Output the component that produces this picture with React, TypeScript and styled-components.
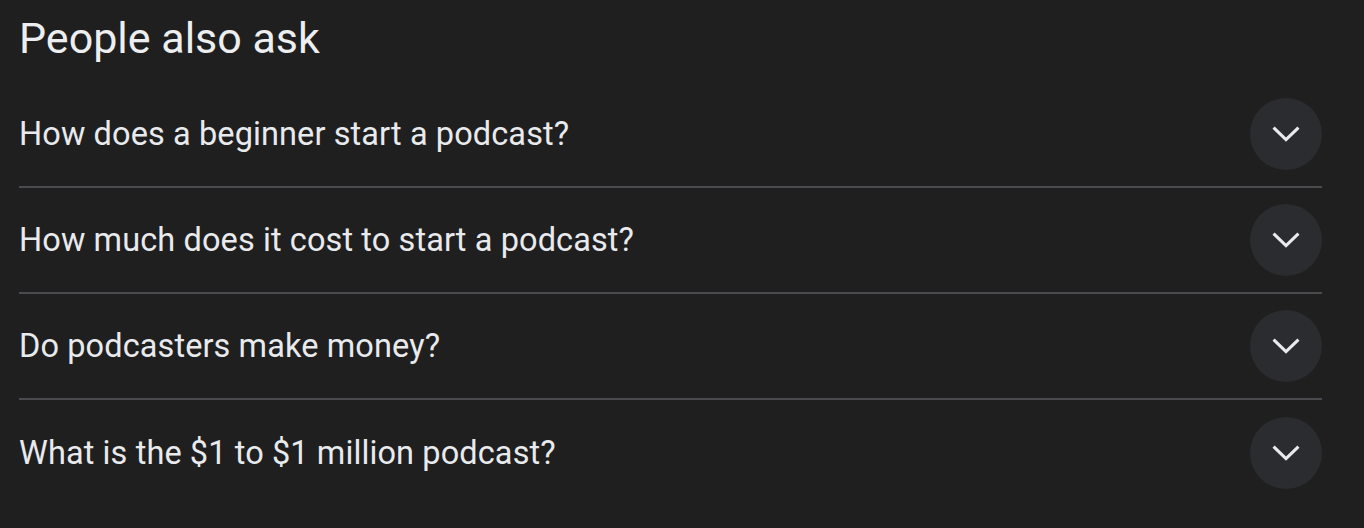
import React from 'react'
import styled, { createGlobalStyle } from 'styled-components'

const GlobalStyle = createGlobalStyle`
  html, body {
    margin: 0;
    padding: 0;
    background: #1f1f1f;
  }
  body {
    font-family: Roboto, 'Noto Sans', sans-serif;
    color: #e8eaed;
  }
`

const Page = styled.div`
  width: 1364px;
  height: 528px;
  box-sizing: border-box;
  padding: 0 42px 0 19px;
  background: #1f1f1f;
  overflow: hidden;
`

const Heading = styled.h2`
  margin: 0;
  height: 82px;
  padding-top: 11px;
  box-sizing: border-box;
  font-size: 43px;
  font-weight: 400;
  line-height: 54px;
  color: #eceef0;
  letter-spacing: 0;
`

const List = styled.div`
  display: flex;
  flex-direction: column;
`

const Row = styled.div<{ $last?: boolean }>`
  height: 106px;
  display: flex;
  align-items: center;
  justify-content: space-between;
  border-bottom: ${({ $last }) => ($last ? 'none' : '2px solid #4a4b4e')};
  box-sizing: border-box;
`

const Question = styled.span`
  font-size: 32.5px;
  line-height: 40px;
  color: #e8eaed;
  letter-spacing: 0.1px;
`

const ToggleButton = styled.div`
  width: 72px;
  height: 72px;
  border-radius: 50%;
  background: #2b2c2f;
  display: flex;
  align-items: center;
  justify-content: center;
  flex-shrink: 0;
`

const Chevron = () => (
  <svg width="32" height="32" viewBox="0 0 24 24" fill="none">
    <path d="M3.5 8 L12 16.2 L20.5 8" stroke="#e8eaed" strokeWidth="2.3" strokeLinecap="square" />
  </svg>
)

const questions = [
  'How does a beginner start a podcast?',
  'How much does it cost to start a podcast?',
  'Do podcasters make money?',
  'What is the $1 to $1 million podcast?',
]

export default function App() {
  return (
    <>
      <GlobalStyle />
      <Page>
        <Heading>People also ask</Heading>
        <List>
          {questions.map((q, i) => (
            <Row key={q} $last={i === questions.length - 1}>
              <Question>{q}</Question>
              <ToggleButton>
                <Chevron />
              </ToggleButton>
            </Row>
          ))}
        </List>
      </Page>
    </>
  )
}
